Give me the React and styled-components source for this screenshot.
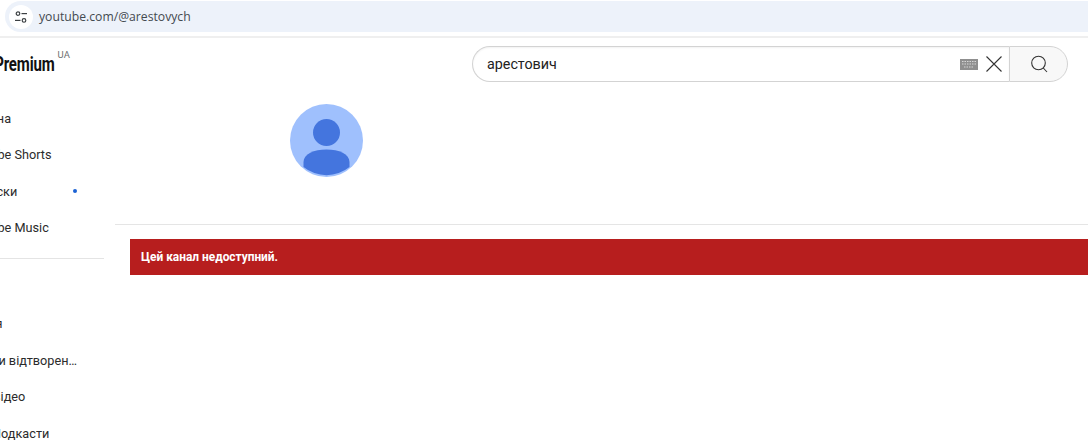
import React from 'react';
import styled, { createGlobalStyle } from 'styled-components';

const Global = createGlobalStyle`
  html, body { margin: 0; padding: 0; background: #fff; }
  body { width: 1088px; height: 448px; overflow: hidden; font-family: Roboto, "Liberation Sans", sans-serif; }
`;

const Page = styled.div`
  width: 1088px;
  height: 448px;
  display: flex;
  flex-direction: column;
  overflow: hidden;
`;

const BrowserBar = styled.div`
  height: 35px;
  flex: none;
  padding: 1px 0 0 5px;
  border-bottom: 2px solid #efefef;
`;

const Omnibox = styled.div`
  height: 31px;
  background: #edf2fa;
  border-radius: 16px 0 0 16px;
  display: flex;
  align-items: center;
  padding-left: 4px;
  gap: 6px;
`;

const TuneButton = styled.div`
  width: 24px;
  height: 24px;
  border-radius: 50%;
  background: #fff;
  display: flex;
  align-items: center;
  justify-content: center;
`;

const Url = styled.span`
  font-family: "Open Sans", sans-serif;
  font-size: 12.2px;
  color: #444a50;
`;

const Body = styled.div`
  flex: 1;
  display: flex;
  min-height: 0;
`;

const Sidebar = styled.aside`
  width: 115px;
  flex: none;
  overflow: hidden;
`;

const Brand = styled.div`
  height: 62px;
  display: flex;
  align-items: flex-start;
  padding-top: 12px;
  box-sizing: border-box;
`;

const BrandName = styled.span`
  font-family: Roboto, sans-serif;
  font-weight: 700;
  font-size: 20px;
  line-height: 28px;
  color: #111;
  display: inline-block;
  margin-left: -26px;
  transform: scaleX(0.75);
  transform-origin: right center;
  letter-spacing: -0.2px;
`;

const Region = styled.sup`
  font-size: 9.5px;
  color: #6f6f6f;
  line-height: 12px;
  margin: -1px 0 0 3px;
  vertical-align: baseline;
`;

const NavRow = styled.div`
  position: relative;
  height: 36.5px;
  width: 104px;
  display: flex;
  align-items: center;
  white-space: nowrap;
  font-size: 12.7px;
  color: #2b2b2b;
`;

const NavText = styled.span`
  margin-left: ${p => p.$shift}px;
`;

const Dot = styled.span`
  position: absolute;
  left: 73px;
  top: 16px;
  width: 4px;
  height: 4px;
  border-radius: 50%;
  background: #1c62d4;
`;

const Divider = styled.div`
  width: 104px;
  height: 1px;
  background: #e4e4e4;
  margin: 12px 0 46.5px;
`;

const Main = styled.main`
  flex: 1;
  min-width: 0;
  display: flex;
  flex-direction: column;
`;

const SearchRow = styled.div`
  display: flex;
  padding: 8px 0 0 357px;
`;

const SearchBox = styled.div`
  width: 537px;
  height: 36px;
  box-sizing: border-box;
  border: 1px solid #d3d3d3;
  border-right: none;
  border-radius: 18px 0 0 18px;
  display: flex;
  align-items: center;
  padding: 0 6px 0 14px;
  box-shadow: inset 0 1px 2px #f2f2f2;
`;

const Query = styled.span`
  flex: 1;
  font-size: 14.3px;
  color: #222;
`;

const SearchButton = styled.div`
  width: 59px;
  height: 36px;
  box-sizing: border-box;
  border: 1px solid #d3d3d3;
  border-radius: 0 18px 18px 0;
  background: #f8f8f8;
  display: flex;
  align-items: center;
  justify-content: center;
`;

const ChannelHead = styled.div`
  height: 143px;
  padding: 22px 0 0 175px;
  box-sizing: border-box;
  border-bottom: 1px solid #e5e5e5;
`;

const Banner = styled.div`
  margin: 14px 0 0 15px;
  height: 36px;
  background: #b71e1e;
  display: flex;
  align-items: center;
  padding-left: 11px;
  font-size: 11.9px;
  font-weight: 700;
  color: #fff;
`;

const KeyboardIcon = styled.svg`
  margin-right: 7px;
`;

const topLinks = [
  { text: 'Головна', shift: -38 },
  { text: 'YouTube Shorts', shift: -38 },
  { text: 'Підписки', shift: -38 },
  { text: 'YouTube Music', shift: -38 },
];

const libraryLinks = [
  { text: 'Історія', shift: -38 },
  { text: 'Списки відтворен…', shift: -38 },
  { text: 'Ваші відео', shift: -38 },
  { text: 'Подкасти', shift: -8 },
];

const App = () => (
  <Page>
    <Global />
    <BrowserBar>
      <Omnibox>
        <TuneButton>
          <svg width="14" height="14" viewBox="0 0 14 14" fill="none" stroke="#3c4043" strokeWidth="1.2">
            <circle cx="4" cy="3.6" r="1.8" />
            <path d="M7.5 3.6H13" />
            <circle cx="10" cy="10.4" r="1.8" />
            <path d="M1 10.4H6.5" />
          </svg>
        </TuneButton>
        <Url>youtube.com/@arestovych</Url>
      </Omnibox>
    </BrowserBar>
    <Body>
      <Sidebar>
        <Brand>
          <BrandName>Premium</BrandName>
          <Region>UA</Region>
        </Brand>
        {topLinks.map((l, i) => (
          <NavRow key={l.text}>
            <NavText $shift={l.shift}>{l.text}</NavText>
            {i === 2 && <Dot />}
          </NavRow>
        ))}
        <Divider />
        {libraryLinks.map(l => (
          <NavRow key={l.text}>
            <NavText $shift={l.shift}>{l.text}</NavText>
          </NavRow>
        ))}
      </Sidebar>
      <Main>
        <SearchRow>
          <SearchBox>
            <Query>арестович</Query>
            <KeyboardIcon width="18" height="11" viewBox="0 0 18 11">
              <rect width="18" height="11" fill="#8f8f8f" />
              <path d="M2 2.5H16M2 5H16M4 8H14" stroke="#d6d6d6" strokeWidth="1" strokeDasharray="1.5 1" />
            </KeyboardIcon>
            <svg width="18" height="18" viewBox="0 0 18 18" stroke="#333" strokeWidth="1.1" fill="none">
              <path d="M1.5 1.5L16.5 16.5M16.5 1.5L1.5 16.5" />
            </svg>
          </SearchBox>
          <SearchButton>
            <svg width="20" height="20" viewBox="0 0 20 20" fill="none" stroke="#333" strokeWidth="1.1">
              <circle cx="9.5" cy="9" r="6.8" />
              <path d="M14.3 14L18 18" />
            </svg>
          </SearchButton>
        </SearchRow>
        <ChannelHead>
          <svg width="73" height="73" viewBox="0 0 73 73">
            <circle cx="36.5" cy="36.5" r="36.5" fill="#9fc0fd" />
            <circle cx="36.5" cy="28.5" r="13.5" fill="#4475de" />
            <path d="M13.5 58C13.5 50 24 45.5 36.5 45.5S59.5 50 59.5 58V63A36.5 36.5 0 0 1 13.5 63Z" fill="#4475de" />
          </svg>
        </ChannelHead>
        <Banner>Цей канал недоступний.</Banner>
      </Main>
    </Body>
  </Page>
);

export default App;
